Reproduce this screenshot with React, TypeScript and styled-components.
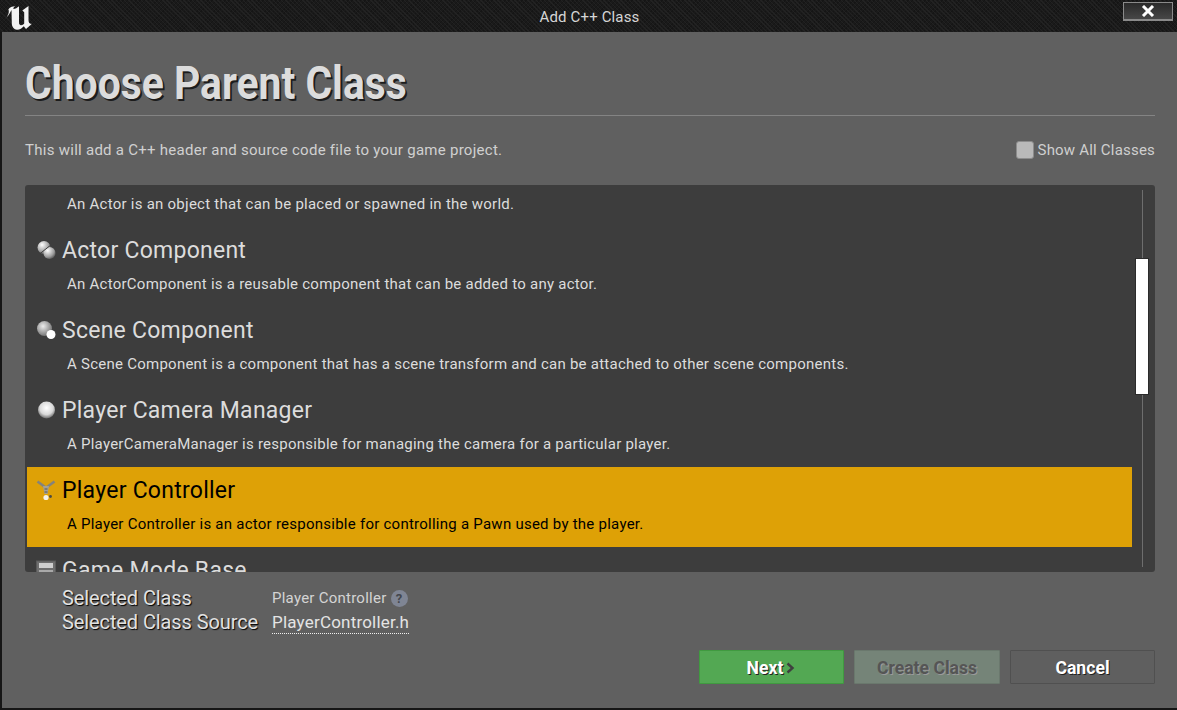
import React from "react";
import styled, { createGlobalStyle } from "styled-components";

const GlobalStyle = createGlobalStyle`
  html, body {
    margin: 0;
    padding: 0;
    width: 100%;
    height: 100%;
    overflow: hidden;
    background: #161616;
  }
  body {
    font-family: Roboto, "Liberation Sans", sans-serif;
  }
`;

interface ClassItem {
  name: string;
  description: string;
  icon: "actor" | "scene" | "camera" | "controller" | "gamemode";
}

const classes: ClassItem[] = [
  { name: "Actor Component", description: "An ActorComponent is a reusable component that can be added to any actor.", icon: "actor" },
  { name: "Scene Component", description: "A Scene Component is a component that has a scene transform and can be attached to other scene components.", icon: "scene" },
  { name: "Player Camera Manager", description: "A PlayerCameraManager is responsible for managing the camera for a particular player.", icon: "camera" },
  { name: "Player Controller", description: "A Player Controller is an actor responsible for controlling a Pawn used by the player.", icon: "controller" },
  { name: "Game Mode Base", description: "", icon: "gamemode" },
];

const UnrealLogo = () => (
  <svg width="32" height="32" viewBox="0 0 32 32">
    <path
      fill="#f2f2f2"
      d="M2.5 20.5 C6 18 8.5 14 10.5 10 L10.8 23 C10.8 27 13 29.5 16 29.8 C19 29.8 21 28 22.8 26.2 L25 29 L31 23.8 C28.5 24.3 27.5 22.5 27.5 20 L27.5 6 L21.3 10.5 L23.2 12.3 L23.2 23.5 C22 25 20.5 25.5 19.3 25 C18.3 24.5 18 23.5 18 22 L18 6.2 C16 7.8 14 9.2 12.5 9 C12 7.8 13 7 14.5 6.3 C11 6.3 8.8 7.5 7.3 9.5 C8 10.5 8 11.5 7.5 13.5 C6.5 16.5 5 18.5 2.5 20.5 Z"
    />
  </svg>
);

const RowIcon = ({ kind }: { kind: ClassItem["icon"] }) => {
  if (kind === "gamemode") {
    return (
      <svg width="20" height="20" viewBox="0 0 20 20">
        <rect x="0.5" y="1" width="19" height="17" fill="#6e6e6e" stroke="#5a5a5a" />
        <rect x="3" y="3" width="14" height="5" fill="#cfcfcf" />
        <rect x="3" y="10" width="14" height="6" fill="#a9a9a9" />
      </svg>
    );
  }
  if (kind === "controller") {
    return (
      <svg width="20" height="22" viewBox="0 0 20 22">
        <path d="M1.5 2.5 L9 8 M18.5 2.5 L11 8" stroke="#85837a" strokeWidth="2.6" fill="none" />
        <path d="M7 7 H13 L11.5 15 H8.5 Z" fill="#a3a096" />
        <path d="M8.5 10 H11.5 M8.5 13 H11.5" stroke="#5d5a4e" strokeWidth="1" />
        <circle cx="10" cy="18.5" r="2.6" fill="#f4f2ea" />
        <circle cx="14.5" cy="17.5" r="1.4" fill="#4b4b45" />
      </svg>
    );
  }
  if (kind === "actor") {
    return (
      <svg width="20" height="20" viewBox="0 0 20 20">
        <defs>
          <radialGradient id="actorBall" cx="35%" cy="30%" r="75%">
            <stop offset="0%" stopColor="#ffffff" />
            <stop offset="70%" stopColor="#9c9c9c" />
            <stop offset="100%" stopColor="#555" />
          </radialGradient>
        </defs>
        <circle cx="8" cy="7.5" r="6.5" fill="url(#actorBall)" />
        <circle cx="13.5" cy="13" r="6" fill="url(#actorBall)" />
        <path d="M3.5 14 L15.5 4.5" stroke="#3e3e3e" strokeWidth="1" />
      </svg>
    );
  }
  if (kind === "scene") {
    return (
      <svg width="20" height="20" viewBox="0 0 20 20">
        <defs>
          <radialGradient id="sceneBall" cx="40%" cy="35%" r="70%">
            <stop offset="0%" stopColor="#ececec" />
            <stop offset="100%" stopColor="#6e6e6e" />
          </radialGradient>
        </defs>
        <circle cx="8.5" cy="8.5" r="7.5" fill="url(#sceneBall)" />
        <circle cx="15" cy="14.5" r="4.5" fill="#ffffff" />
      </svg>
    );
  }
  return (
    <svg width="20" height="20" viewBox="0 0 20 20">
      <defs>
        <radialGradient id="cameraBall" cx="50%" cy="38%" r="65%">
          <stop offset="0%" stopColor="#ffffff" />
          <stop offset="60%" stopColor="#d8d8d8" />
          <stop offset="100%" stopColor="#5c5c5c" />
        </radialGradient>
      </defs>
      <circle cx="10.5" cy="10" r="8.5" fill="url(#cameraBall)" />
    </svg>
  );
};

const App = () => (
  <>
    <GlobalStyle />
    <Window>
      <TitleBar>
        <LogoSlot>
          <UnrealLogo />
        </LogoSlot>
        <TitleText>Add C++ Class</TitleText>
        <CloseButton>
          <svg width="14" height="12" viewBox="0 0 14 12">
            <path d="M2 1 L12 11 M12 1 L2 11" stroke="#fff" strokeWidth="3" />
          </svg>
        </CloseButton>
      </TitleBar>
      <Body>
        <Heading>Choose Parent Class</Heading>
        <Rule />
        <IntroRow>
          <IntroText>This will add a C++ header and source code file to your game project.</IntroText>
          <ShowAll>
            <CheckBox />
            Show All Classes
          </ShowAll>
        </IntroRow>
        <ClassList>
          <ClassRows>
            {/* list is scrolled, only the tail of the first row shows */}
            <PartialRow>
              <ClassDesc>An Actor is an object that can be placed or spawned in the world.</ClassDesc>
            </PartialRow>
            {classes.map((item) => (
              <ClassRow key={item.name} $selected={item.name === "Player Controller"}>
                <ClassHead>
                  <IconSlot>
                    <RowIcon kind={item.icon} />
                  </IconSlot>
                  <ClassName>{item.name}</ClassName>
                </ClassHead>
                <ClassDesc>{item.description}</ClassDesc>
              </ClassRow>
            ))}
          </ClassRows>
          <ScrollTrack />
          <ScrollThumb />
        </ClassList>
        <Selection>
          <SelectionLabels>
            <SelectionLabel>Selected Class</SelectionLabel>
            <SelectionLabel>Selected Class Source</SelectionLabel>
          </SelectionLabels>
          <SelectionValues>
            <SelectedName>
              Player Controller
              <HelpBadge>?</HelpBadge>
            </SelectedName>
            <SourceLink>PlayerController.h</SourceLink>
          </SelectionValues>
        </Selection>
        <Actions>
          <ActionButton $variant="next">
            Next
            <svg width="12" height="12" viewBox="0 0 11 12">
              <path d="M3 1.5 L8 6 L3 10.5" stroke="#3f3f3f" strokeWidth="2.4" fill="none" />
            </svg>
          </ActionButton>
          <ActionButton $variant="disabled">Create Class</ActionButton>
          <ActionButton $variant="cancel">Cancel</ActionButton>
        </Actions>
      </Body>
    </Window>
  </>
);

export default App;

const Window = styled.div`
  width: 1177px;
  height: 710px;
  display: flex;
  flex-direction: column;
  background: #161616;
  overflow: hidden;
`;

const TitleBar = styled.div`
  height: 32px;
  flex: none;
  display: flex;
  align-items: center;
  justify-content: center;
  position: relative;
  background-color: #1a1a1a;
  background-image: repeating-linear-gradient(45deg, transparent 0 2px, #222222 2px 3px),
    repeating-linear-gradient(-45deg, transparent 0 2px, #151515 2px 3px);
`;

const LogoSlot = styled.div`
  position: absolute;
  left: 1px;
  top: 0;
  width: 32px;
  height: 32px;
`;

const TitleText = styled.div`
  font-size: 15px;
  color: #d6d6d6;
  letter-spacing: 0.15px;
  position: relative;
  top: 1px;
  left: 1px;
`;

const CloseButton = styled.div`
  position: absolute;
  left: 1123px;
  top: 2px;
  width: 50px;
  height: 19px;
  box-sizing: border-box;
  border: 1px solid #8a8a8a;
  border-bottom-width: 2px;
  background: linear-gradient(#2a2a2a, #474747);
  display: flex;
  align-items: center;
  justify-content: center;
  padding-right: 1px;
`;

const Body = styled.div`
  width: 1175px;
  height: 676px;
  margin-left: 2px;
  flex: none;
  box-sizing: border-box;
  background: #606060;
  padding: 0 22px 0 23px;
  display: flex;
  flex-direction: column;
`;

const Heading = styled.h1`
  margin: 25px 0 0;
  font-size: 46px;
  line-height: 52px;
  font-weight: 700;
  color: #dcdcdc;
  white-space: nowrap;
  transform: scaleX(0.888);
  transform-origin: left center;
  text-shadow: 2px 2px 0 #1c1c1c;
`;

const Rule = styled.div`
  height: 1px;
  margin-top: 6px;
  background: #848484;
`;

const IntroRow = styled.div`
  display: flex;
  align-items: center;
  justify-content: space-between;
  height: 20px;
  margin-top: 24px;
`;

const IntroText = styled.div`
  font-size: 15px;
  color: #d0d0d0;
  letter-spacing: 0.27px;
`;

const ShowAll = styled.div`
  display: flex;
  align-items: center;
  gap: 4px;
  font-size: 15px;
  color: #cfcfcf;
  letter-spacing: 0.2px;
`;

const CheckBox = styled.div`
  width: 18px;
  height: 18px;
  border-radius: 3px;
  background: #b9b9b9;
  border: 1px solid #8c8c8c;
  box-sizing: border-box;
`;

const ClassList = styled.div`
  position: relative;
  height: 387px;
  margin-top: 25px;
  background: #3d3d3d;
  border-radius: 3px;
  overflow: hidden;
`;

const ClassRows = styled.div`
  margin: 0 23px 0 2px;
`;

const PartialRow = styled.div`
  height: 42px;
  box-sizing: border-box;
  padding: 1px 0 0 9px;
  color: #dcdcdc;
`;

const ClassRow = styled.div<{ $selected?: boolean }>`
  height: 80px;
  box-sizing: border-box;
  padding: 7px 0 0 9px;
  background: ${(p) => (p.$selected ? "#dea106" : "transparent")};
  color: ${(p) => (p.$selected ? "#000000" : "#dcdcdc")};
`;

const ClassHead = styled.div`
  display: flex;
  align-items: center;
  height: 32px;
`;

const IconSlot = styled.div`
  width: 26px;
  height: 20px;
  flex: none;
  display: flex;
  align-items: center;
`;

const ClassName = styled.div`
  font-size: 23px;
  letter-spacing: 0.25px;
`;

const ClassDesc = styled.div`
  font-size: 15px;
  letter-spacing: 0.25px;
  margin: 9px 0 0 31px;
  line-height: 18px;
`;

const ScrollTrack = styled.div`
  position: absolute;
  left: 1117px;
  top: 5px;
  bottom: 5px;
  width: 1px;
  background: #6e6e6e;
`;

const ScrollThumb = styled.div`
  position: absolute;
  left: 1110px;
  top: 73px;
  width: 14px;
  height: 137px;
  box-sizing: border-box;
  background: #ffffff;
  border: 1px solid #2b2b2b;
`;

const Selection = styled.div`
  display: flex;
  margin: 14px 0 0 37px;
`;

const SelectionLabels = styled.div`
  width: 210px;
  display: flex;
  flex-direction: column;
`;

const SelectionLabel = styled.div`
  font-size: 20px;
  line-height: 24px;
  letter-spacing: -0.1px;
  color: #e2e2e2;
  text-shadow: 1px 1px 1px #000;
`;

const SelectionValues = styled.div`
  display: flex;
  flex-direction: column;
`;

const SelectedName = styled.div`
  display: flex;
  align-items: center;
  gap: 4px;
  height: 24px;
  font-size: 15px;
  letter-spacing: 0.25px;
  color: #d4d4d4;
`;

const HelpBadge = styled.span`
  width: 17px;
  height: 17px;
  border-radius: 50%;
  background: #7f8594;
  color: #43464d;
  font-size: 13px;
  font-weight: 700;
  letter-spacing: 0;
  display: flex;
  align-items: center;
  justify-content: center;
`;

const SourceLink = styled.div`
  font-size: 17px;
  line-height: 21px;
  margin-top: 2px;
  letter-spacing: 0.2px;
  color: #e4e4e4;
  border-bottom: 1px dotted #f0f0f0;
  align-self: flex-start;
`;

const buttonTones = {
  next: "background: #53a853; border-color: #409a40; color: #ffffff; text-shadow: 1px 1px 0 #222;",
  disabled: "background: #758478; border-color: #6a786d; color: #555555; text-shadow: 1px 1px 0 #9a9a9a; width: 146px;",
  cancel: "background: #5f5f5f; border-color: #505050; color: #ffffff; text-shadow: 1px 1px 0 #222;",
};

const Actions = styled.div`
  display: flex;
  gap: 10px;
  justify-content: flex-end;
  margin-top: 16px;
`;

const ActionButton = styled.div<{ $variant: keyof typeof buttonTones }>`
  width: 145px;
  height: 34px;
  box-sizing: border-box;
  padding-top: 1px;
  border: 1px solid;
  border-radius: 1px;
  display: flex;
  align-items: center;
  justify-content: center;
  gap: 1px;
  font-size: 17.6px;
  font-weight: 700;
  ${(p) => buttonTones[p.$variant]}
`;
